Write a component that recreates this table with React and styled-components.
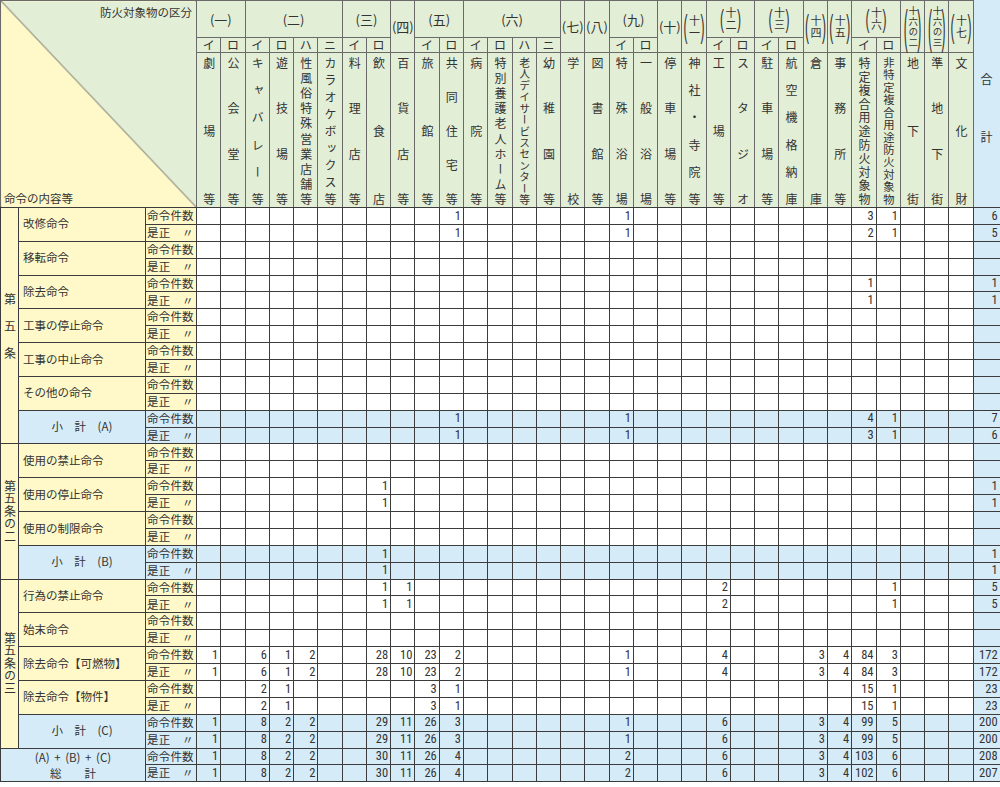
import React from "react";
import styled, { createGlobalStyle } from "styled-components";

const GREEN = "#e3eed6";
const YELLOW = "#fff9c9";
const BLUE = "#d5ebf8";
const HEAD_LINE = "#6a6a6a";
const BODY_LINE = "#3c3c3c";

const GlobalStyle = createGlobalStyle`
  body {
    margin: 0;
    background: #fff;
    color: #333;
    font-family: "Noto Sans CJK JP", "Noto Sans", sans-serif;
  }
`;

const groups = [
  { num: "一", subs: [["イ", "劇場等"], ["ロ", "公会堂等"]] },
  {
    num: "二",
    subs: [["イ", "キャバレー等"], ["ロ", "遊技場等"], ["ハ", "性風俗特殊営業店舗等"], ["ニ", "カラオケボックス等"]],
  },
  { num: "三", subs: [["イ", "料理店等"], ["ロ", "飲食店"]] },
  { num: "四", name: "百貨店等" },
  { num: "五", subs: [["イ", "旅館等"], ["ロ", "共同住宅等"]] },
  {
    num: "六",
    subs: [["イ", "病院等"], ["ロ", "特別養護老人ホーム等"], ["ハ", "老人デイサービスセンター等"], ["ニ", "幼稚園等"]],
  },
  { num: "七", name: "学校" },
  { num: "八", name: "図書館等" },
  { num: "九", subs: [["イ", "特殊浴場"], ["ロ", "一般浴場"]] },
  { num: "十", name: "停車場等" },
  { num: "十一", name: "神社・寺院等" },
  { num: "十二", subs: [["イ", "工場等"], ["ロ", "スタジオ"]] },
  { num: "十三", subs: [["イ", "駐車場等"], ["ロ", "航空機格納庫"]] },
  { num: "十四", name: "倉庫" },
  { num: "十五", name: "事務所等" },
  { num: "十六", subs: [["イ", "特定複合用途防火対象物"], ["ロ", "非特定複合用途防火対象物"]] },
  { num: "十六の二", name: "地下街" },
  { num: "十六の三", name: "準地下街" },
  { num: "十七", name: "文化財" },
];

const columnNames = groups.flatMap((g) => (g.subs ? g.subs.map((s) => s[1]) : [g.name]));

// values keyed by column index, "t" = 合計
const sections = [
  {
    article: "第五条",
    spaced: true,
    items: [
      { name: "改修命令", rows: [{ 10: 1, 17: 1, 27: 3, 28: 1, t: 6 }, { 10: 1, 17: 1, 27: 2, 28: 1, t: 5 }] },
      { name: "移転命令", rows: [{}, {}] },
      { name: "除去命令", rows: [{ 27: 1, t: 1 }, { 27: 1, t: 1 }] },
      { name: "工事の停止命令", rows: [{}, {}] },
      { name: "工事の中止命令", rows: [{}, {}] },
      { name: "その他の命令", rows: [{}, {}] },
    ],
    subtotal: {
      label: "小　計　(A)",
      rows: [{ 10: 1, 17: 1, 27: 4, 28: 1, t: 7 }, { 10: 1, 17: 1, 27: 3, 28: 1, t: 6 }],
    },
  },
  {
    article: "第五条の二",
    items: [
      { name: "使用の禁止命令", rows: [{}, {}] },
      { name: "使用の停止命令", rows: [{ 7: 1, t: 1 }, { 7: 1, t: 1 }] },
      { name: "使用の制限命令", rows: [{}, {}] },
    ],
    subtotal: { label: "小　計　(B)", rows: [{ 7: 1, t: 1 }, { 7: 1, t: 1 }] },
  },
  {
    article: "第五条の三",
    items: [
      {
        name: "行為の禁止命令",
        rows: [{ 7: 1, 8: 1, 21: 2, 28: 1, t: 5 }, { 7: 1, 8: 1, 21: 2, 28: 1, t: 5 }],
      },
      { name: "始末命令", rows: [{}, {}] },
      {
        name: "除去命令【可燃物】",
        rows: [
          { 0: 1, 2: 6, 3: 1, 4: 2, 7: 28, 8: 10, 9: 23, 10: 2, 17: 1, 21: 4, 25: 3, 26: 4, 27: 84, 28: 3, t: 172 },
          { 0: 1, 2: 6, 3: 1, 4: 2, 7: 28, 8: 10, 9: 23, 10: 2, 17: 1, 21: 4, 25: 3, 26: 4, 27: 84, 28: 3, t: 172 },
        ],
      },
      {
        name: "除去命令【物件】",
        rows: [{ 2: 2, 3: 1, 9: 3, 10: 1, 27: 15, 28: 1, t: 23 }, { 2: 2, 3: 1, 9: 3, 10: 1, 27: 15, 28: 1, t: 23 }],
      },
    ],
    subtotal: {
      label: "小　計　(C)",
      rows: [
        { 0: 1, 2: 8, 3: 2, 4: 2, 7: 29, 8: 11, 9: 26, 10: 3, 17: 1, 21: 6, 25: 3, 26: 4, 27: 99, 28: 5, t: 200 },
        { 0: 1, 2: 8, 3: 2, 4: 2, 7: 29, 8: 11, 9: 26, 10: 3, 17: 1, 21: 6, 25: 3, 26: 4, 27: 99, 28: 5, t: 200 },
      ],
    },
  },
];

const grandTotal = [
  { 0: 1, 2: 8, 3: 2, 4: 2, 7: 30, 8: 11, 9: 26, 10: 4, 17: 2, 21: 6, 25: 3, 26: 4, 27: 103, 28: 6, t: 208 },
  { 0: 1, 2: 8, 3: 2, 4: 2, 7: 30, 8: 11, 9: 26, 10: 4, 17: 2, 21: 6, 25: 3, 26: 4, 27: 102, 28: 6, t: 207 },
];

const Table = styled.table`
  width: 1000px;
  table-layout: fixed;
  border-collapse: collapse;
`;

const Col = styled.col`
  width: ${(p) => p.$w};
`;

const HeadRow = styled.tr`
  height: ${(p) => p.$h}px;
`;

const Th = styled.th`
  border: 1px solid ${HEAD_LINE};
  background: ${GREEN};
  padding: 0;
  font-weight: normal;
  font-size: 12px;
  line-height: 1;
  text-align: center;
  vertical-align: middle;
  color: #333;
`;

const CornerCell = styled(Th)`
  border-bottom-color: ${BODY_LINE};
  background: linear-gradient(
    to top right,
    ${YELLOW} calc(50% - 0.7px),
    #555 50%,
    ${GREEN} calc(50% + 0.7px)
  );
`;

const CornerInner = styled.div`
  height: 205px;
  display: flex;
  flex-direction: column;
  justify-content: space-between;
  padding: 5px 4px 2px 3px;
  box-sizing: border-box;
  font-size: 11.5px;
`;

const CornerTop = styled.span`
  align-self: flex-end;
`;

const CornerBottom = styled.span`
  align-self: flex-start;
`;

const TotalHead = styled(Th)`
  background: ${BLUE};
  border-top-color: ${BLUE};
  border-bottom-color: ${BODY_LINE};
`;

const TotalHeadInner = styled.div`
  display: flex;
  flex-direction: column;
  align-items: center;
  gap: 46px;
  padding-top: 8px;
  font-size: 12px;
`;

const NameCell = styled(Th)`
  vertical-align: top;
  border-bottom-color: ${BODY_LINE};
`;

const VText = styled.div`
  height: 153px;
  display: flex;
  flex-direction: column;
  align-items: center;
  justify-content: space-between;
  padding: 4px 0 1px;
  box-sizing: border-box;
  font-size: ${(p) => p.$size}px;
`;

const VChar = styled.span`
  writing-mode: vertical-rl;
  line-height: 1;
`;

const GroupText = styled.span`
  font-size: 13px;
  white-space: nowrap;
`;

const Stacked = styled.div`
  display: flex;
  align-items: center;
  justify-content: center;
`;

const Paren = styled.span`
  display: inline-block;
  font-family: "Liberation Sans", sans-serif;
  font-size: 12px;
  line-height: 12px;
  transform: scaleY(${(p) => p.$scale});
`;

const CharStack = styled.span`
  writing-mode: vertical-rl;
  font-size: ${(p) => p.$size}px;
  line-height: 1;
  letter-spacing: 1px;
  margin: 0 ${(p) => p.$gap}px;
`;

const BodyRow = styled.tr`
  height: 16.9px;
`;

const Label = styled.td`
  border: 1px solid ${BODY_LINE};
  background: ${(p) => (p.$blue ? BLUE : YELLOW)};
  padding: ${(p) => (p.$center ? "0" : "0 0 0 4px")};
  font-size: 11.5px;
  line-height: 1.2;
  text-align: ${(p) => (p.$center ? "center" : "left")};
  vertical-align: middle;
  white-space: nowrap;
  color: #333;
`;

const KindLabel = styled(Label)`
  padding: 0 0 0 1px;
  letter-spacing: 0.2px;
`;

const TotalLabel = styled(Label)`
  line-height: 16px;
`;

const ArticleCell = styled(Label)`
  padding: 0;
`;

const ArticleText = styled.div`
  writing-mode: vertical-rl;
  margin: 0 auto;
  font-size: 12px;
  line-height: 1;
  letter-spacing: ${(p) => (p.$spaced ? "15px" : "0.5px")};
  padding-top: ${(p) => (p.$spaced ? "15px" : "0")};
`;

const TotalFormula = styled.div`
  word-spacing: 2px;
`;

const Num = styled.td`
  border: 1px solid ${BODY_LINE};
  background: ${(p) => (p.$blue ? BLUE : "#fff")};
  padding: 0 2px 0 0;
  text-align: right;
  vertical-align: middle;
  font-family: "Liberation Sans Narrow", "Roboto Condensed", Roboto, sans-serif;
  font-size: 12.5px;
  line-height: 1;
  color: #333;
`;

function GroupLabel({ num, tall }) {
  const chars = [...num];
  if (chars.length === 1) return <GroupText>({num})</GroupText>;
  const long = chars.length > 2;
  const size = long ? 9.5 : 11;
  const scale = tall ? (long ? 3.9 : 2.6) : 2.2;
  return (
    <Stacked>
      <Paren $scale={scale}>(</Paren>
      <CharStack $size={size} $gap={long ? 0 : 1}>
        {num}
      </CharStack>
      <Paren $scale={scale}>)</Paren>
    </Stacked>
  );
}

function NumberCells({ values, blue }) {
  return (
    <>
      {columnNames.map((_, i) => (
        <Num key={i} $blue={blue}>
          {values[i]}
        </Num>
      ))}
      <Num $blue>{values.t}</Num>
    </>
  );
}

function Section({ section }) {
  const span = section.items.length * 2 + 2;
  const rows = [];
  section.items.forEach((item, idx) => {
    item.rows.forEach((values, r) => {
      rows.push(
        <BodyRow key={`${item.name}-${r}`}>
          {idx === 0 && r === 0 && (
            <ArticleCell rowSpan={span} $center>
              <ArticleText $spaced={section.spaced}>{section.article}</ArticleText>
            </ArticleCell>
          )}
          {r === 0 && <Label rowSpan={2}>{item.name}</Label>}
          <KindLabel>{r === 0 ? "命令件数" : "是正　〃"}</KindLabel>
          <NumberCells values={values} />
        </BodyRow>
      );
    });
  });
  section.subtotal.rows.forEach((values, r) => {
    rows.push(
      <BodyRow key={`sub-${r}`}>
        {r === 0 && (
          <Label rowSpan={2} $blue $center>
            {section.subtotal.label}
          </Label>
        )}
        <KindLabel $blue>{r === 0 ? "命令件数" : "是正　〃"}</KindLabel>
        <NumberCells values={values} blue />
      </BodyRow>
    );
  });
  return rows;
}

const vSize = (name) => (name.length > 12 ? 10.8 : name.length > 11 ? 11.3 : 12);

export default function App() {
  return (
    <>
      <GlobalStyle />
      <Table>
        <colgroup>
          <Col $w="18px" />
          <Col $w="127px" />
          <Col $w="51px" />
          {columnNames.map((_, i) => (
            <Col key={i} $w="24.28px" />
          ))}
          <Col $w="27px" />
        </colgroup>
        <thead>
          <HeadRow $h={37}>
            <CornerCell rowSpan={3} colSpan={3}>
              <CornerInner>
                <CornerTop>防火対象物の区分</CornerTop>
                <CornerBottom>命令の内容等</CornerBottom>
              </CornerInner>
            </CornerCell>
            {groups.map((g) =>
              g.subs ? (
                <Th key={g.num} colSpan={g.subs.length}>
                  <GroupLabel num={g.num} />
                </Th>
              ) : (
                <Th key={g.num} rowSpan={2}>
                  <GroupLabel num={g.num} tall />
                </Th>
              )
            )}
            <TotalHead rowSpan={3}>
              <TotalHeadInner>
                <span>合</span>
                <span>計</span>
              </TotalHeadInner>
            </TotalHead>
          </HeadRow>
          <HeadRow $h={15}>
            {groups
              .filter((g) => g.subs)
              .flatMap((g) => g.subs)
              .map(([mark, name]) => (
                <Th key={name}>{mark}</Th>
              ))}
          </HeadRow>
          <HeadRow $h={155}>
            {columnNames.map((name) => (
              <NameCell key={name}>
                <VText $size={vSize(name)}>
                  {[...name].map((c, i) => (
                    <VChar key={i}>{c}</VChar>
                  ))}
                </VText>
              </NameCell>
            ))}
          </HeadRow>
        </thead>
        <tbody>
          {sections.map((s) => (
            <Section key={s.article} section={s} />
          ))}
          {grandTotal.map((values, r) => (
            <BodyRow key={`total-${r}`}>
              {r === 0 && (
                <TotalLabel rowSpan={2} colSpan={2} $blue $center>
                  <TotalFormula>(A) + (B) + (C)</TotalFormula>
                  <div>総　　計</div>
                </TotalLabel>
              )}
              <KindLabel $blue>{r === 0 ? "命令件数" : "是正　〃"}</KindLabel>
              <NumberCells values={values} blue />
            </BodyRow>
          ))}
        </tbody>
      </Table>
    </>
  );
}
